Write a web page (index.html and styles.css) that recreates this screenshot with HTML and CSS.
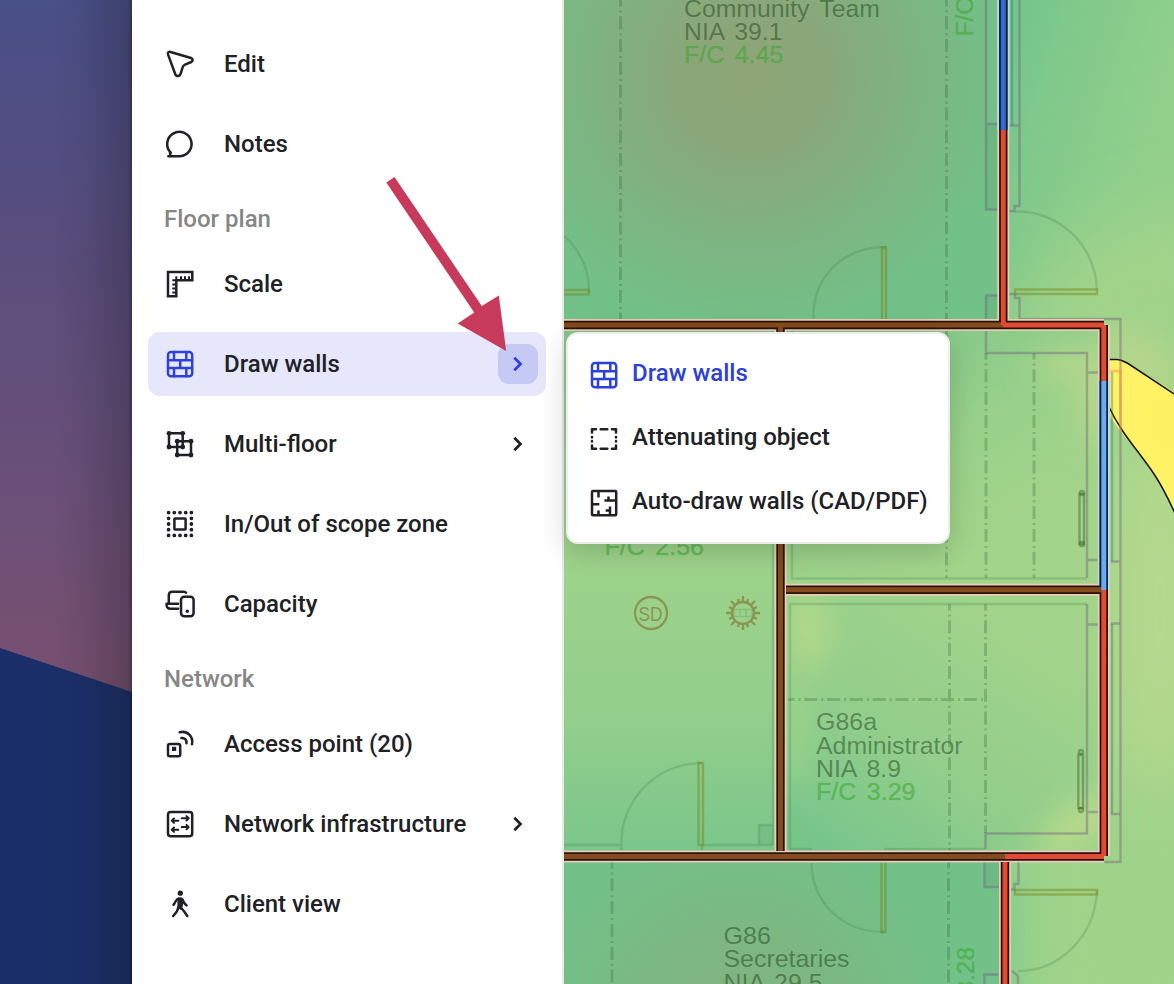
FILE: index.html
```html
<!DOCTYPE html>
<html lang="en">
<head>
<meta charset="utf-8">
<title>Floor planner</title>
<link rel="stylesheet" href="styles.css">
</head>
<body>
<svg class="defs" width="0" height="0">
  <symbol id="i-wall" viewBox="0 0 32 32"><rect x="4" y="4" width="24.2" height="24.2" rx="3"/><path d="M4 12.2h24M4 20h24M10 4v8.2M22.300 4v8.200M16.200 12.200V20M10 20v8.200M22.300 20v8.200"/></symbol>
  <symbol id="i-chev" viewBox="0 0 40 40"><path d="M16.300 13.800l6.200 6.200-6.200 6.200"/></symbol>
</svg>
<div class="app">
  <div class="desktop"><svg width="132" height="984"><path d="M0 648L132 692V984H0z" fill="#1a2f69"/></svg></div>
  <nav class="sidebar">
    <ul class="group">
      <li class="item"><svg class="icon" viewBox="0 0 32 32"><path d="M4 6.400C3.500 4.400 4.700 3.400 6.600 4L27 10c2 .8 2.200 3 .3 4l-6.300 2.700c-1.300.6-2 1.300-2.300 2.500l-1.700 5.300c-.6 2.500-1.700 3.600-3.200 3.600-1.400 0-2.300-.8-2.700-2.400z"/></svg><span>Edit</span></li>
      <li class="item"><svg class="icon" viewBox="0 0 32 32"><path d="M16 28.200H4.300c2-.2 2.300-1.600 1.700-3.200l.8-.3A12.200 12.200 0 1 1 16 28.200z"/></svg><span>Notes</span></li>
    </ul>
    <h2 class="heading">Floor plan</h2>
    <ul class="group">
      <li class="item"><svg class="icon sharp" viewBox="0 0 32 32"><path d="M4 4h24.300v8.300H12.300v16H4z"/><path class="thin" d="M12.300 12.300V8.300M17 12.300V8.300M21 12.300V8.300M25 12.300V8.300M12.300 12.300H8.300M12.300 16.500H8.300M12.300 20.500H8.300M12.300 24.500H8.300"/></svg><span>Scale</span></li>
      <li class="item active"><svg class="icon"><use href="#i-wall"/></svg><span>Draw walls</span><button class="more"><svg><use href="#i-chev"/></svg></button></li>
      <li class="item"><svg class="icon" viewBox="0 0 32 32"><path d="M5 5.300h13.700V19H5zM13.200 13.200H27V27H13.200z"/><g class="solid"><circle cx="5" cy="5.300" r="2.400"/><circle cx="18.700" cy="5.300" r="2.400"/><circle cx="5" cy="19" r="2.400"/><circle cx="18.700" cy="19" r="2.400"/><circle cx="13.200" cy="13.200" r="2.400"/><circle cx="27" cy="13.200" r="2.400"/><circle cx="13.200" cy="27" r="2.400"/><circle cx="27" cy="27" r="2.400"/></g></svg><span>Multi-floor</span><button class="more"><svg><use href="#i-chev"/></svg></button></li>
      <li class="item"><svg class="icon" viewBox="0 0 32 32"><rect x="10.400" y="10.400" width="11.200" height="11.200" rx=".5"/><path class="dots" d="M4.600 4.600H27.500M4.600 27.400H27.500M4.600 10.300V22M27.400 10.300V22"/></svg><span>In/Out of scope zone</span></li>
      <li class="item"><svg class="icon" viewBox="0 0 32 32"><path d="M22 4.700C21.500 3.900 21 3.700 20 3.700H8.300C6 3.700 4.800 4.900 4.800 7.200v8.500M14 15.700H2.500c0 3.500 1 5.100 4 5.100H14"/><rect x="17" y="8.800" width="12.600" height="19.400" rx="3.200"/><circle class="solid" cx="23.300" cy="23.300" r="1.700"/></svg><span>Capacity</span></li>
    </ul>
    <h2 class="heading">Network</h2>
    <ul class="group">
      <li class="item"><svg class="icon" viewBox="0 0 32 32"><rect x="4" y="16" width="12.200" height="12.200" rx="1.800"/><rect class="solid" x="8" y="18.800" width="4.200" height="4.200"/><path d="M15.700 4.200C23.500 2.500 29.500 8.500 28 16.300M17.400 10c3.600-.2 5.600 2 5 5.200"/></svg><span>Access point (20)</span></li>
      <li class="item"><svg class="icon" viewBox="0 0 32 32"><rect x="4" y="4" width="24.200" height="24.200" rx="2.600"/><path class="thin" d="M14.300 12.700H7.900M10 10.500l-2.200 2.200L10 14.900M17.700 10.300h6.900M22.500 8.100l2.200 2.200-2.200 2.200M14.300 21.700H7.900M10 19.500l-2.200 2.200 2.200 2.200M17.700 19.100h6.900M22.500 16.900l2.200 2.200-2.200 2.200"/></svg><span>Network infrastructure</span><button class="more"><svg><use href="#i-chev"/></svg></button></li>
      <li class="item"><svg class="icon" viewBox="0 0 32 32"><circle class="solid" cx="16.300" cy="5.200" r="2.600"/><path class="solid" d="M14 9.300l4 .2 1.500 2.500-.8 6.800-2 3.200-3.200-2.500-.1-5z"/><path d="M13.500 11l-2 2.600M10.800 15l-1.300 1.700M18.500 11.500l1.700 3.500 2.300 2.300M14.500 19l-1.500 4.200L9.200 28M17.700 20.500l2.300 2.700L23.300 28"/></svg><span>Client view</span></li>
    </ul>
  </nav>
  <main class="map">
    <svg width="610" height="984" viewBox="564 0 610 984">
      <defs>
        <filter id="b" x="-80%" y="-50%" width="260%" height="200%"><feGaussianBlur stdDeviation="30"/></filter>
        <filter id="s" x="-100%" y="-100%" width="300%" height="300%"><feGaussianBlur stdDeviation="15"/></filter>
        <radialGradient id="top" gradientUnits="userSpaceOnUse" cx="750" cy="75" r="265"><stop offset="0" stop-color="#8fa577"/><stop offset=".3" stop-color="#89a87a"/><stop offset=".6" stop-color="#7eb380"/><stop offset="1" stop-color="#72c189"/></radialGradient>
        <linearGradient id="out" gradientUnits="userSpaceOnUse" x1="1010" y1="60" x2="1170" y2="110"><stop offset="0" stop-color="#75c68b"/><stop offset=".4" stop-color="#84ca8b"/><stop offset="1" stop-color="#91d08b"/></linearGradient>
        <linearGradient id="mid" x1="0" y1="0" x2="0" y2="1"><stop offset="0" stop-color="#80c789"/><stop offset=".28" stop-color="#99d08a"/><stop offset=".45" stop-color="#9dd38a"/><stop offset=".75" stop-color="#92ce8c"/><stop offset="1" stop-color="#79c68a"/></linearGradient>
        <linearGradient id="cor" gradientUnits="userSpaceOnUse" x1="860" y1="300" x2="1000" y2="540"><stop offset="0" stop-color="#78c489"/><stop offset=".6" stop-color="#99d18a"/><stop offset="1" stop-color="#a2d48a"/></linearGradient>
        <linearGradient id="adm" gradientUnits="userSpaceOnUse" x1="1020" y1="620" x2="850" y2="870"><stop offset="0" stop-color="#a2d48a"/><stop offset=".55" stop-color="#93ce8b"/><stop offset="1" stop-color="#76c58b"/></linearGradient>
        <radialGradient id="sec" gradientUnits="userSpaceOnUse" cx="740" cy="1030" r="210"><stop offset="0" stop-color="#84b07c"/><stop offset=".6" stop-color="#7aba84"/><stop offset="1" stop-color="#72c189"/></radialGradient>
        <clipPath id="cOut"><path d="M1005 0H1174V984H1005V856H1104V325H1005z"/></clipPath>
        <clipPath id="cCor"><path d="M780 325h324v265H780z"/></clipPath>
        <clipPath id="cAdm"><path d="M780 590h324v266H780z"/></clipPath>
      </defs>
      <path fill="url(#top)" d="M564 0h440v325H564z"/>
      <path fill="url(#mid)" d="M564 325h217v531H564z"/>
      <path fill="url(#cor)" d="M780 325h324v265H780z"/>
      <g clip-path="url(#cCor)"><ellipse cx="1075" cy="365" rx="45" ry="14" fill="#b4d78b" filter="url(#s)"/><ellipse cx="1096" cy="400" rx="16" ry="45" fill="#b9d88c" filter="url(#s)"/></g>
      <path fill="url(#adm)" d="M780 590h324v266H780z"/>
      <g clip-path="url(#cAdm)"><ellipse cx="808" cy="630" rx="20" ry="42" fill="#b8da8a" opacity=".85" filter="url(#s)"/><ellipse cx="795" cy="720" rx="12" ry="70" fill="#a0d48a" filter="url(#s)"/><ellipse cx="1080" cy="825" rx="50" ry="20" fill="#b9da8a" transform="rotate(-35 1080 825)" filter="url(#s)"/></g>
      <path fill="url(#sec)" d="M564 856h441v128H564z"/>
      <g clip-path="url(#cOut)">
        <path fill="url(#out)" d="M1005 0h169v984h-169z"/>
        <path d="M1015 320L1080 235 1230 190V1050H1030z" fill="#a0d38a" filter="url(#b)"/>
        <ellipse cx="1160" cy="610" rx="40" ry="180" fill="#b9da8d" filter="url(#b)"/>
        <ellipse cx="1140" cy="360" rx="45" ry="22" transform="rotate(30 1140 360)" fill="#b7d58c" filter="url(#s)"/>
        <path d="M985 880h30v140h-30z" fill="#82cb8b" filter="url(#s)"/>
      </g>
      <path d="M1104 359.500h13c4 0 7 2 11 4l50 31V518c-8-17-14-30-24-44-16-23-36-43-50-67z" fill="#fff266"/>
      <path d="M1155 415l25-10v45z" fill="#fdea5e" filter="url(#s)"/>
      <path d="M1108 359.500h9c4 0 7 2 11 4l50 33M1178 520c-8-18-14-31-24-46-16-24-32-39-46-69" fill="none" stroke="#151510" stroke-width="1.500"/>

      <g class="dashes">
        <path d="M620.500 0V319M946.500 0V319"/>
        <path d="M946.500 331V578M986 353V578M1034 353V578"/>
        <path d="M949.500 604V850M985.500 604V833M788 699.500H985"/>
        <path d="M612 862V984M948.500 862V984"/>
      </g>
      <g class="cad green">
        <path d="M564 236A72 72 0 0 1 589 292M813.500 319C812 278 842 247 886 247M1015 211.500C1060 211 1095 245 1097 290"/>
        <path d="M621.500 850V845H564M621.500 845C620 801 656 763 702 763M702 850V845H773M773 331V845M759 845V825h14"/>
        <path d="M811.500 862C812 904 843 932 884 932M1097 891C1095 936 1060 971 1018 971"/>
        <path d="M792 331V578.500H1087M790 850V604h297M790 849h22M884 849h101"/>
      </g>
      <g class="shade"><path d="M759 825h14v20h-14zM986 295h13v24h-13zM985 862h15v24h-15zM986 125h13v84h-13z"/></g>
      <g class="cad grey">
        <path d="M986 0V209.500h12M986 124h12M1019.500 0V206h-5v5h-7M1009 125.500h10M986 319V295.500h12M1007 294h8v4h4.500V319h101V862h-16M986 331v22h101V578M1087 372.500h14M1087 560h14M1111 561.500h9"/>
        <path d="M1087 604V833.500H985.500V849M1087 624.500h14M1087 812h14M1111 623.500h9M1111 814h9M984.500 862v25h15M1018.500 862v22h-4v5.500h-8M984.500 984v-9.500h14M1012 971l6 5v8"/>
      </g>
      <path class="cad warm" d="M1109 371h11.500V432"/>
      <g class="cad teal"><path d="M1012 0V125M1112 372V561M1112 624V813"/></g>
      <g class="cad olive"><path d="M564 290h25v4.500h-25M882 319V247.500h4V319M1015 289.500h82v4.500h-82zM698.500 763h4.500v82h-4.500zM881.500 862v70h4v-70M1015 890h82v4.500h-82z"/></g>
      <g class="cad handle"><rect x="1079.500" y="494" width="4.500" height="50"/><circle cx="1082" cy="493" r="2"/><circle cx="1082" cy="544" r="2"/><rect x="1078.300" y="755" width="4.700" height="53"/><circle cx="1081" cy="752" r="2"/><circle cx="1081" cy="810" r="2"/></g>
      <g class="detector">
        <circle cx="651" cy="613" r="16"/><circle cx="743" cy="613" r="11"/>
        <path d="M743 602v-6M743 624v6M732 613h-6M754 613h6M735 605l-4-4M751 621l4 4M751 605l4-4M735 621l-4 4M739 603l-1-4M747 603l1-4M739 623l-1 4M747 623l1 4M733 609l-4-2M753 609l4-2M733 617l-4 2M753 617l4 2"/>
        <path class="faint" d="M734 609.500h18v7h-18zM740 610v6M746 610v6"/>
      </g>
      <text class="sd" x="638.500" y="620.500" textLength="24" lengthAdjust="spacingAndGlyphs">SD</text>

      <g class="label">
        <text x="684" y="16.500" textLength="196" lengthAdjust="spacingAndGlyphs">Community Team</text><text x="684" y="40" textLength="98.500" lengthAdjust="spacingAndGlyphs">NIA 39.1</text>
        <text x="816" y="730" textLength="61" lengthAdjust="spacingAndGlyphs">G86a</text><text x="816" y="754" textLength="146.500" lengthAdjust="spacingAndGlyphs">Administrator</text><text x="816" y="777" textLength="85" lengthAdjust="spacingAndGlyphs">NIA 8.9</text>
        <text x="723.500" y="944" textLength="47.500" lengthAdjust="spacingAndGlyphs">G86</text><text x="723.500" y="967" textLength="126" lengthAdjust="spacingAndGlyphs">Secretaries</text><text x="723.500" y="991" textLength="99" lengthAdjust="spacingAndGlyphs">NIA 29.5</text>
      </g>
      <g class="label fc">
        <text x="684" y="63" textLength="99.500" lengthAdjust="spacingAndGlyphs">F/C 4.45</text><text x="604.500" y="555" textLength="99.500" lengthAdjust="spacingAndGlyphs">F/C 2.56</text><text x="816" y="800" textLength="99.500" lengthAdjust="spacingAndGlyphs">F/C 3.29</text>
        <text transform="translate(973 36.500) rotate(-90)">F/C</text>
        <text transform="translate(974 947) rotate(-90)" text-anchor="end">3.28</text>
      </g>

      <g class="walls">
        <path class="halo" d="M564 325H1104M780.500 325V851M786 589.700H1104M564 856.500H1104M1005 862V984M1003.300 0V325M1103.800 325V856"/>
        <path class="halo cool" d="M1003.300 0V130M1103.800 381V590"/>
        <path class="rim" d="M564 325H1104M780.500 325V851M786 589.700H1104M564 856.500H1104M1005 862V984M1003.300 0V325M1103.800 325V856"/>
        <path class="rim night" d="M1003.300 0V130M1103.800 381V590"/>
        <path class="core brown" d="M564 325H1003M780.500 325V851M786 589.700H1104M564 856.500H1005"/>
        <path class="core red" d="M1003.300 130V325M1003 325H1104M1103.800 325V381M1103.800 590V856M1005 856.500H1104M1005 862V984"/>
        <path class="core blue" d="M1003.300 0V130"/><path class="core sky" d="M1103.800 381V590"/>
      </g>
    </svg>
  </main>
  <ul class="menu">
    <li class="option chosen"><svg class="icon"><use href="#i-wall"/></svg><span>Draw walls</span></li>
    <li class="option"><svg class="icon" viewBox="0 0 32 32"><path d="M4 9.500V6.300h4M12.700 6.300h6.600M24 6.300h4v3.200M28 14v.5M28 18v.5M28 22.500v3.200h-4M19.300 25.700h-6.600M8 25.700H4v-3.200M4 18v.5M4 14v.5"/></svg><span>Attenuating object</span></li>
    <li class="option"><svg class="icon sharp" viewBox="0 0 32 32"><rect x="4" y="4" width="24.200" height="24.200" rx="1"/><path d="M10.500 4v6.500M4 17.300h7.300M10.500 23.500v4.700M16.500 13.500h11.700M20.500 9.500v4M22 19.500v8.700M17.700 23.500H22"/></svg><span>Auto-draw walls (CAD/PDF)</span></li>
  </ul>
  <svg class="pointer" width="122" height="176" viewBox="386 176 122 176"><path d="M386.300 182.500L394.500 177l87.300 129 17-10.500 7.400 55.500-48.500-27.500 16.500-11z" fill="#c83a5b"/></svg>
</div>
</body>
</html>
```

FILE: styles.css
```css
* { box-sizing: border-box; }
body { margin: 0; font-family: Roboto, sans-serif; font-size: 24px; font-weight: 500; color: #202126; }
ul { list-style: none; margin: 0; padding: 0; }
.defs { position: absolute; }
.app { position: relative; display: flex; width: 1174px; height: 984px; overflow: hidden; }
.desktop {
  width: 132px; flex: none; position: relative;
  background: linear-gradient(#4a5088 0, #4d4f86 60px, #5b4e7d 270px, #6b5078 500px, #775070 665px);
}
.desktop svg { display: block; }
.desktop::after { content: ""; position: absolute; inset: 0; background: linear-gradient(90deg, transparent 40%, rgba(20,22,30,.08) 65%, rgba(20,22,30,.26) 97%, rgba(10,12,20,.45)); }
.sidebar { width: 432px; flex: none; padding: 32px 16px 0; background: #fff; border-right: 2px solid #e9e9ea; }
.group { display: flex; flex-direction: column; gap: 16px; }
.item { display: flex; align-items: center; height: 64px; padding: 0 8px 0 16px; border-radius: 12px; line-height: 28px; }
.item span { flex: 1; margin-left: 28px; white-space: nowrap; }
.icon { width: 32px; height: 32px; flex: none; display: block; fill: none; stroke: currentColor; stroke-width: 2.5; stroke-linejoin: round; stroke-linecap: round; }
.sharp { stroke-linejoin: miter; stroke-linecap: butt; }
.solid { fill: currentColor; stroke: none; }
.thin { stroke-width: 2; }
.dots { stroke-width: 3.8; stroke-dasharray: 0 5.7; }
.active { background: #e6e7fa; }
.active .icon, .active .more { color: #2c40dc; }
.more { width: 40px; height: 40px; padding: 0; border: 0; border-radius: 11px; background: none; color: inherit; }
.more svg { display: block; width: 40px; height: 40px; fill: none; stroke: currentColor; stroke-width: 2.7; }
.active .more { background: #c5caf4; }
.heading { display: flex; align-items: center; height: 76px; margin: 0; padding: 10px 16px 0; font-size: 24px; font-weight: 500; color: #868686; }
.map { flex: 1; }
.map svg { display: block; }
.menu {
  position: absolute; left: 566px; top: 332px; width: 384px; height: 212px; padding: 9px 20px;
  background: #fff; border: 2px solid #ededee; border-radius: 12px;
  box-shadow: 0 8px 28px rgba(0,0,0,.17);
}
.option { display: flex; align-items: center; height: 64px; line-height: 28px; }
.option span { margin: 0 0 4px 12px; white-space: nowrap; }
.chosen { color: #2c40dc; }
.pointer { position: absolute; left: 386px; top: 176px; }

.dashes { fill: none; stroke: #386b3d; stroke-opacity: .3; stroke-width: 3; stroke-dasharray: 13 4 2 3.8; stroke-dashoffset: 6.5; }
.cad { fill: none; stroke-width: 2.4; }
.green { stroke: rgba(60,120,70,.23); }
.grey { stroke: rgba(112,88,125,.4); }
.warm { stroke: rgba(255,140,60,.45); }
.teal { stroke: rgba(40,110,120,.36); }
.olive { stroke: rgba(115,125,10,.42); }
.handle { stroke: rgba(45,90,30,.42); }
.shade { fill: rgba(60,120,90,.1); }
.detector { fill: none; stroke: rgb(139,150,82); stroke-width: 2.3; }
.faint { stroke: rgba(80,130,70,.25); stroke-width: 1.4; }
.sd { font: 20px "Liberation Sans", sans-serif; fill: rgb(139,150,82); }
.label { font: 24.4px "Liberation Sans", Arial, sans-serif; word-spacing: 3.5px; fill: rgba(25,62,20,.48); }
.fc { fill: rgba(50,165,40,.47); stroke: rgba(50,165,40,.3); stroke-width: .7; }
.walls { fill: none; }
.halo { stroke: #eacdb9; stroke-width: 12; }
.cool { stroke: #bfd7ea; }
.rim { stroke: #28130b; stroke-width: 8.4; }
.night { stroke: #14233c; }
.core { stroke-width: 4.9; }
.brown { stroke: #834b1e; }
.red { stroke: #e24a34; }
.blue { stroke: #2f6bd0; }
.sky { stroke: #69aaf0; }
```
